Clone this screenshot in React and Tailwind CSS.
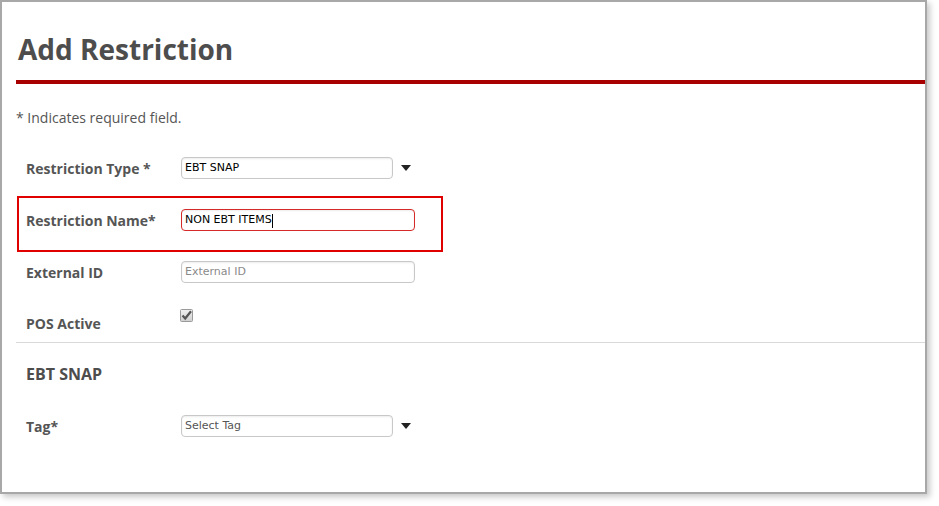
import React from "react";

function Arrow() {
  return (
    <svg width="10" height="6" viewBox="0 0 10 6" className="ml-[8px]">
      <path d="M0 0 L10 0 L5 6 Z" fill="#222" />
    </svg>
  );
}

function Box({ w, children, red }) {
  return (
    <div
      className={`h-[22px] ${w} rounded-[4px] border ${red ? "border-[#d42a2a]" : "border-[#c8c8c8]"} bg-white shadow-[inset_0_1px_2px_rgba(0,0,0,0.08)] flex items-center pl-[3px] pt-[1px] text-[11px] text-black`}
      style={{ fontFamily: '"DejaVu Sans", Verdana, sans-serif' }}
    >
      {children}
    </div>
  );
}

function Label({ children }) {
  return (
    <div className="w-[165px] shrink-0 pl-[10px] pt-[2px] text-[14px] font-bold text-[#555555] leading-[20px]">
      {children}
    </div>
  );
}

export default function App() {
  return (
    <div className="bg-white w-[939px] h-[506px]">
      <div
        className="w-[927px] h-[494px] border-2 border-[#a8a8a8] bg-white shadow-[3px_3px_6px_rgba(0,0,0,0.22)] pl-[14px] pt-[28px]"
        style={{ fontFamily: '"Open Sans", "Noto Sans", sans-serif' }}
      >
        <h1 className="text-[28px] font-bold leading-[38px] text-[#4d4d4d] pl-[2px]">Add Restriction</h1>
        <div className="mt-[12px] h-[4px] bg-[#a80000]" />
        <p className="mt-[24px] text-[14px] leading-[20px] text-[#555555]">* Indicates required field.</p>

        <div className="mt-[14px]">
          <div className="flex items-center h-[52px]">
            <Label>Restriction Type *</Label>
            <Box w="w-[212px]">EBT SNAP</Box>
            <Arrow />
          </div>
          <div className="relative flex items-center h-[52px]">
            <Label>Restriction Name*</Label>
            <Box w="w-[234px]" red>
              NON EBT ITEMS<span className="inline-block w-[1px] h-[14px] bg-black" />
            </Box>
            <div className="absolute left-[1px] top-[2px] w-[426px] h-[56px] border-2 border-[#e00000]" />
          </div>
          <div className="flex items-center h-[52px]">
            <Label>External ID</Label>
            <Box w="w-[234px]">
              <span className="text-[#8a8a8a]">External ID</span>
            </Box>
          </div>
          <div className="flex items-start h-[44px]">
            <div className="pt-[14px]">
              <Label>POS Active</Label>
            </div>
            <svg width="14" height="14" viewBox="0 0 14 14" className="mt-[11px] -ml-[1px]">
              <defs>
                <linearGradient id="cb" x1="0" y1="0" x2="0" y2="1">
                  <stop offset="0" stopColor="#f0f0f0" />
                  <stop offset="1" stopColor="#cfcfcf" />
                </linearGradient>
              </defs>
              <rect x="0.5" y="0.5" width="12" height="12" rx="1" fill="url(#cb)" stroke="#9a9a9a" />
              <path d="M2.5 6.5 L5.2 9.5 L11 2.2" fill="none" stroke="#555" strokeWidth="2.2" />
            </svg>
          </div>
        </div>

        <div className="h-[1px] bg-[#d9d9d9]" />
        <h2 className="mt-[20px] pl-[10px] text-[16px] font-bold leading-[22px] text-[#4d4d4d]">EBT SNAP</h2>
        <div className="mt-[15px] flex items-center h-[52px]">
          <Label>Tag*</Label>
          <Box w="w-[212px]">
            <span className="text-[#555]">Select Tag</span>
          </Box>
          <Arrow />
        </div>
      </div>
    </div>
  );
}
